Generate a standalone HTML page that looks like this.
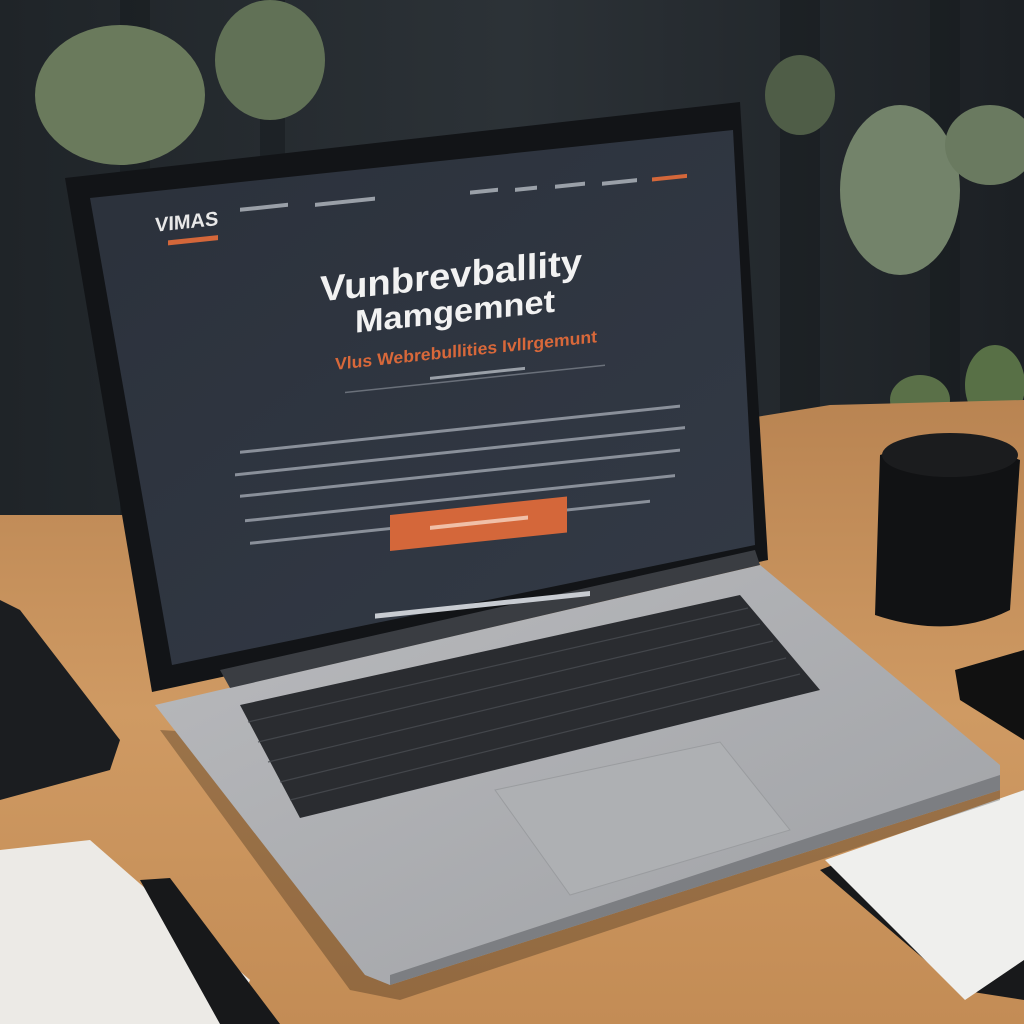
<!DOCTYPE html>
<html><head><meta charset="utf-8"><style>
html,body{margin:0;padding:0;width:1024px;height:1024px;overflow:hidden;background:#23282c}
svg{display:block}
text{font-family:"Liberation Sans",sans-serif}
</style></head><body>
<svg width="1024" height="1024" viewBox="0 0 1024 1024">
<defs>
<linearGradient id="bg" x1="0" y1="0" x2="1" y2="0">
<stop offset="0" stop-color="#1f2428"/><stop offset="0.5" stop-color="#2c3237"/><stop offset="1" stop-color="#1c2024"/>
</linearGradient>
<linearGradient id="desk" x1="0" y1="0" x2="0" y2="1">
<stop offset="0" stop-color="#b98452"/><stop offset="0.5" stop-color="#cf9a63"/><stop offset="1" stop-color="#c38c55"/>
</linearGradient>
<linearGradient id="base" x1="0" y1="0" x2="1" y2="1">
<stop offset="0" stop-color="#b9babd"/><stop offset="1" stop-color="#9fa1a5"/>
</linearGradient>
<linearGradient id="scr" x1="0" y1="0" x2="1" y2="1">
<stop offset="0" stop-color="#2b313b"/><stop offset="1" stop-color="#333a46"/>
</linearGradient>
</defs>
<rect width="1024" height="1024" fill="url(#bg)"/>
<!-- curtain folds -->
<g fill="#181c20" opacity="0.6">
<rect x="120" y="0" width="30" height="520"/><rect x="260" y="0" width="25" height="200"/><rect x="780" y="0" width="40" height="420"/><rect x="930" y="0" width="30" height="420"/>
</g>
<!-- plants -->
<g fill="#5f6e55">
<ellipse cx="120" cy="95" rx="85" ry="70" fill="#6a7a5c"/>
<ellipse cx="270" cy="60" rx="55" ry="60" fill="#617156"/>
<ellipse cx="900" cy="190" rx="60" ry="85" fill="#73836a"/>
<ellipse cx="990" cy="145" rx="45" ry="40" fill="#6a7a60"/>
<ellipse cx="800" cy="95" rx="35" ry="40" fill="#4f5d47"/>
<ellipse cx="920" cy="400" rx="30" ry="25" fill="#5a7048"/>
<ellipse cx="995" cy="385" rx="30" ry="40" fill="#587046"/>
</g>
<!-- desk -->
<polygon points="0,515 150,515 830,405 1024,400 1024,1024 0,1024" fill="url(#desk)"/>
<!-- pot -->
<path d="M880,455 Q950,430 1020,460 L1010,610 Q950,640 875,615 Z" fill="#111214"/>
<ellipse cx="950" cy="455" rx="68" ry="22" fill="#1b1c1e"/>
<!-- left tablet -->
<polygon points="0,600 20,610 120,740 110,770 0,800" fill="#1b1d20"/>
<!-- right device -->
<polygon points="955,670 1024,650 1024,740 960,700" fill="#111"/>
<!-- papers -->
<polygon points="0,850 90,840 250,980 230,1024 0,1024" fill="#eceae6"/>
<polygon points="140,880 170,878 280,1024 220,1024" fill="#17181a"/>
<polygon points="820,870 1024,790 1024,1000 960,990" fill="#18191b"/>
<polygon points="825,860 1024,790 1024,960 965,1000" fill="#efefed"/>
<!-- laptop shadow -->
<polygon points="160,730 1000,780 1000,800 400,1000 350,990" fill="#000" opacity="0.25"/>
<!-- base -->
<polygon points="155,705 760,565 1000,765 1000,790 390,985 365,975" fill="url(#base)"/>
<polygon points="390,975 1000,775 1000,790 390,985" fill="#7c7e82"/>
<!-- keyboard -->
<polygon points="240,705 740,595 820,690 300,818" fill="#2a2c30"/>
<g stroke="#4a4d52" stroke-width="1.2" opacity="0.8">
<line x1="248" y1="722" x2="748" y2="608"/><line x1="258" y1="742" x2="760" y2="624"/><line x1="268" y1="762" x2="773" y2="641"/><line x1="280" y1="782" x2="786" y2="658"/><line x1="290" y1="800" x2="800" y2="674"/>
</g>
<!-- trackpad -->
<polygon points="495,790 720,742 790,830 570,895" fill="#aeb0b3" stroke="#9a9c9f"/>
<!-- lid -->
<polygon points="65,178 740,102 768,560 152,692" fill="#121417"/>
<polygon points="90,198 733,130 755,545 172,665" fill="url(#scr)"/>
<polygon points="220,670 755,550 760,565 230,688" fill="#3a3d42"/>
<!-- screen content -->
<g transform="matrix(1,-0.105,0,1,0,0)">
<text x="155" y="248" font-size="20" font-weight="bold" fill="#e8e8e8">V<tspan fill="#e8e8e8">IMAS</tspan></text>
<rect x="168" y="258" width="50" height="5" fill="#d4673a"/>
<rect x="240" y="233" width="48" height="4" fill="#9aa0a8"/>
<rect x="315" y="236" width="60" height="4" fill="#9aa0a8"/>
<rect x="470" y="240" width="28" height="4" fill="#9aa0a8"/>
<rect x="515" y="242" width="22" height="4" fill="#9aa0a8"/>
<rect x="555" y="243" width="30" height="4" fill="#9aa0a8"/>
<rect x="602" y="245" width="35" height="4" fill="#9aa0a8"/>
<rect x="652" y="246" width="35" height="4" fill="#d4673a"/>
<text x="320" y="335" font-size="36" font-weight="bold" fill="#f2f2f2" textLength="262" lengthAdjust="spacingAndGlyphs">Vunbrevballity</text>
<text x="355" y="370" font-size="32" font-weight="bold" fill="#f2f2f2" textLength="200" lengthAdjust="spacingAndGlyphs">Mamgemnet</text>
<text x="335" y="405" font-size="17" font-weight="bold" fill="#d8683a" textLength="262" lengthAdjust="spacingAndGlyphs">Vlus Webrebullities Ivllrgemunt</text>
<rect x="345" y="428" width="260" height="1.5" fill="#6a707a"/>
<rect x="430" y="422" width="95" height="3" fill="#9aa0a8"/>
<g fill="#8a909a">
<rect x="240" y="476" width="440" height="3"/><rect x="235" y="498" width="450" height="3"/>
<rect x="240" y="520" width="440" height="3"/><rect x="245" y="545" width="430" height="3"/>
<rect x="250" y="568" width="400" height="3"/>
</g>
<rect x="390" y="556" width="177" height="36" fill="#d4673a"/>
<rect x="430" y="571" width="98" height="4" fill="#f0c0a8"/>
<rect x="375" y="653" width="215" height="5" fill="#c8ccd2"/>
</g>
</svg>
</body></html>
